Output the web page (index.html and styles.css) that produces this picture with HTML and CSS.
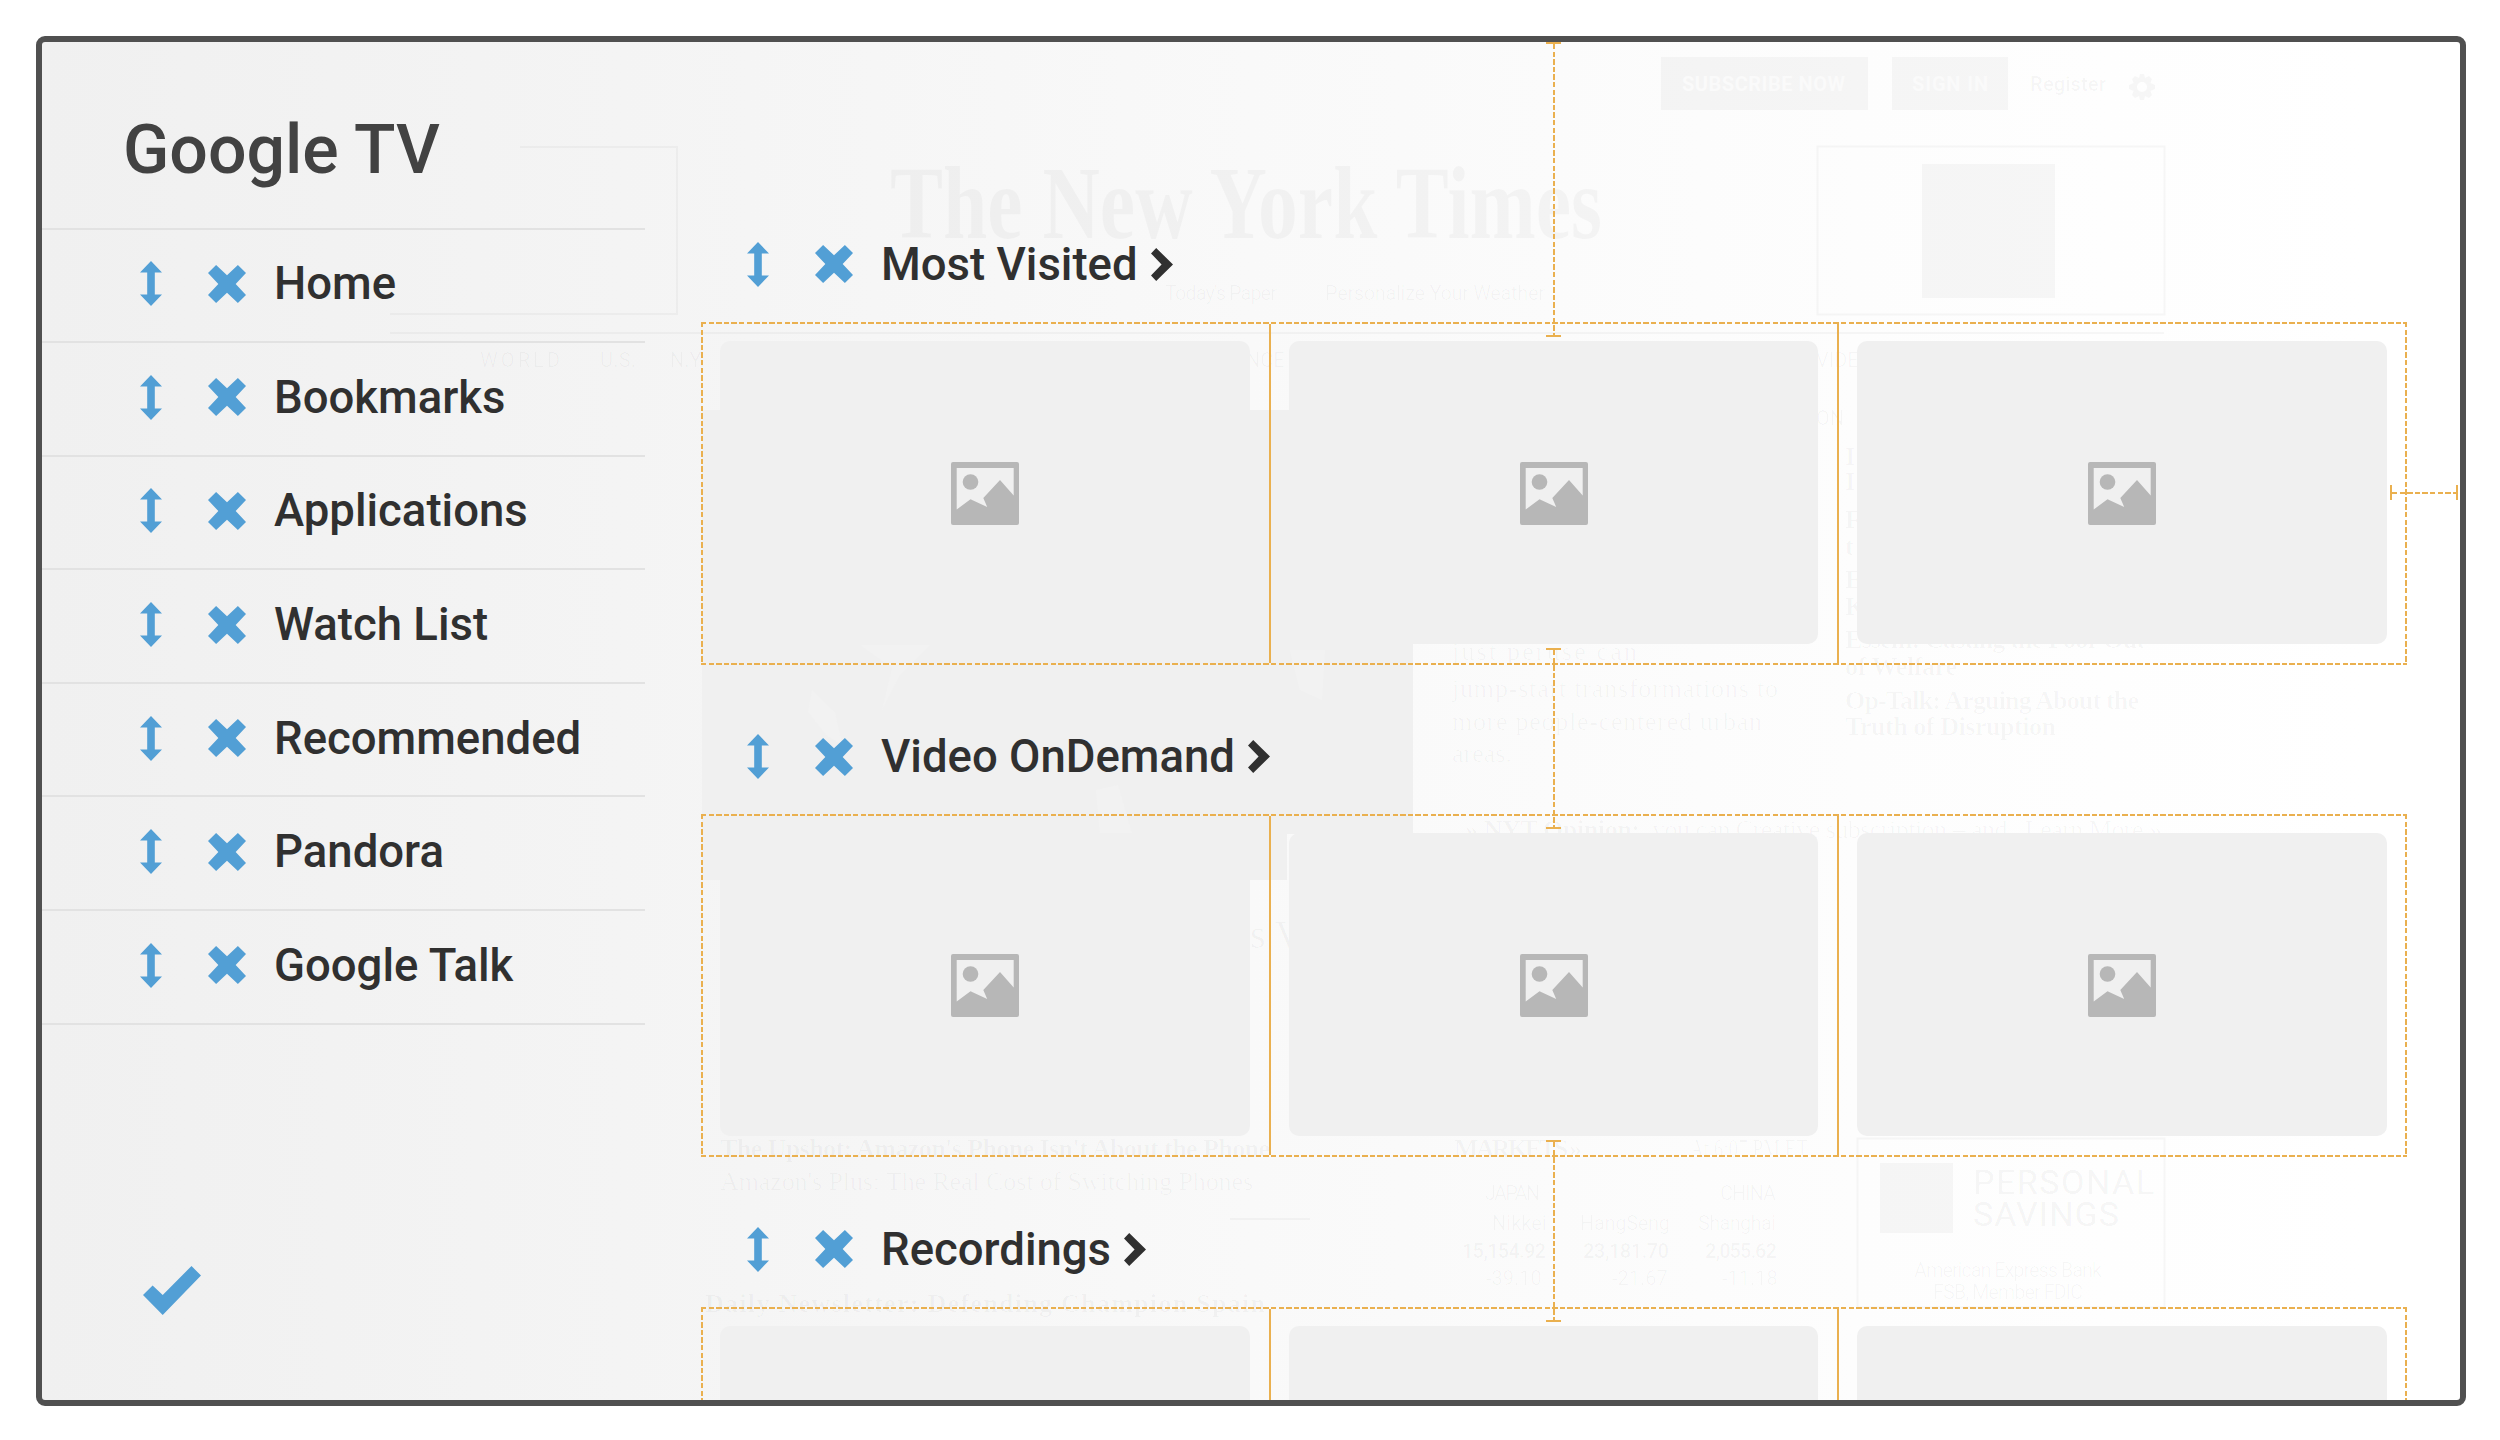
FILE: index.html
```html
<!DOCTYPE html>
<html lang="en">
<head>
    <meta charset="UTF-8">
    <meta name="viewport" content="width=device-width, initial-scale=1.0">
    <title>Google TV</title>
    <link rel="stylesheet" href="styles.css">
</head>
<body>
    <!-- Shared icons -->
    <svg class="icon-defs" width="0" height="0">
        <symbol id="icon-move" viewBox="0 0 22 45">
            <path d="M11 0L22 11.4H14.8V33.6H22L11 45L0 33.6H7.2V11.4H0Z"/>
        </symbol>
        <symbol id="icon-remove" viewBox="0 0 37.5 37.5">
            <path d="M8 0L18.75 10.2L29.5 0L37.5 8L27.3 18.75L37.5 29.5L29.5 37.5L18.75 27.3L8 37.5L0 29.5L10.2 18.75L0 8Z"/>
        </symbol>
        <symbol id="icon-chevron" viewBox="0 0 22 33">
            <path d="M5.2 0L22 16.5L5.2 33L0 27.6L10.6 16.5L0 5.4Z"/>
        </symbol>
        <symbol id="icon-check" viewBox="0 0 58 49">
            <path d="M48.5 0L58 9.6L19.7 49L0 29L9.6 19.4L19.7 29Z"/>
        </symbol>
        <symbol id="icon-image" viewBox="0 0 68 63">
            <path fill-rule="evenodd" d="M2 0H66Q68 0 68 2V61Q68 63 66 63H2Q0 63 0 61V2Q0 0 2 0ZM5.7 6V47.5L19.5 37.3L36.2 45L32.3 36L49 18L62.7 33.6V6Z"/>
            <circle cx="19.5" cy="20" r="7.8"/>
        </symbol>
        <symbol id="icon-gear" viewBox="-14 -14 28 28">
            <path fill-rule="evenodd" d="M-2 -13H2L3 -9L7 -11L10 -8L8.500 -4L13 -2V2L8.500 4L10 8L7 11L3 9L2 13H-2L-3 9L-7 11L-10 8L-8.500 4L-13 2V-2L-8.500 -4L-10 -8L-7 -11L-3 -9ZM0 -5A5 5 0 1 0 0 5A5 5 0 1 0 0 -5Z"/>
        </symbol>
    </svg>

    <div class="screen">
        <!-- Web page showing faintly through the overlay -->
        <svg class="backdrop" viewBox="42 42 2418 1358">
            <g class="blocks">
                <rect x="1661" y="57" width="207" height="53"/>
                <rect x="1892" y="57" width="116" height="53"/>
                <rect x="1922" y="164" width="133" height="134"/>
                <rect x="1880" y="1163" width="73" height="70"/>
            </g>
            <rect class="photo" x="702" y="410" width="711" height="424"/>
            <rect class="photo" x="702" y="834" width="585" height="46"/>
            <g class="photo-light">
                <path d="M812 690L835 712L842 745L826 735L808 712Z"/>
                <path d="M860 645H930L900 675L882 710L892 668Z"/>
                <path d="M1100 834L1096 790L1118 785L1132 834Z"/>
                <path d="M1290 650H1325L1322 700L1300 690Z"/>
            </g>
            <g class="lines">
                <rect x="1817.5" y="146.500" width="347" height="168"/>
                <rect x="1857.5" y="1138.500" width="307" height="169"/>
                <path d="M520 147H677V314H390M390 333H2164M1230 1219H1310"/>
            </g>
            <g class="button-text">
                <text x="1682" y="91" textLength="163">SUBSCRIBE NOW</text>
                <text x="1912" y="91" textLength="76">SIGN IN</text>
            </g>
            <text class="masthead" x="890" y="238" textLength="712" lengthAdjust="spacingAndGlyphs">The New York Times</text>
            <g class="sans">
                <text class="strong" x="2030" y="91" textLength="76">Register</text>
                <text x="1165" y="300" textLength="112">Today's Paper</text>
                <text x="1325" y="300" textLength="220">Personalize Your Weather</text>
                <text x="480" y="367" textLength="80">WORLD</text>
                <text x="600" y="367" textLength="36">U.S.</text>
                <text x="670" y="367">N.Y.</text>
                <text x="1246" y="367">NCE</text>
                <text x="1816" y="367">VIDEO</text>
                <text x="1816" y="425">ON</text>
                <text x="1485" y="1200" textLength="55">JAPAN</text>
                <text x="1720" y="1200" textLength="56">CHINA</text>
                <text x="1492" y="1230">Nikkei</text>
                <text x="1580" y="1230" textLength="90">HangSeng</text>
                <text x="1698" y="1230" textLength="78">Shanghai</text>
                <text class="strong" x="1462" y="1258" textLength="84">15,154.92</text>
                <text class="strong" x="1583" y="1258" textLength="86">23,181.70</text>
                <text class="strong" x="1705" y="1258" textLength="72">2,055.62</text>
                <text x="1486" y="1285">-39.10</text>
                <text x="1612" y="1285">-21.67</text>
                <text x="1722" y="1285">-11.18</text>
                <text x="1914" y="1277" textLength="188">American Express Bank</text>
                <text x="1933" y="1299" textLength="150">FSB, Member FDIC</text>
            </g>
            <use href="#icon-gear" x="2128" y="73" width="28" height="28"/>
            <g class="savings">
                <text x="1973" y="1194" textLength="181">PERSONAL</text>
                <text x="1973" y="1226" textLength="146">SAVINGS</text>
            </g>
            <g class="headline">
                <text x="400" y="215" textLength="240">to Wella Barca,</text>
                <text x="460" y="266" textLength="145">Does Image</text>
            </g>
            <g class="headline italic">
                <text x="350" y="442" textLength="275">Militants Find</text>
                <text x="340" y="494" textLength="308">Weapons That</text>
                <text x="536" y="549" textLength="106">Against</text>
                <text x="490" y="602" textLength="125">Attacks</text>
                <text x="460" y="1038" textLength="152">Is Said to</text>
                <text x="350" y="1080" textLength="270">Have Seized Iraq's</text>
                <text x="320" y="1127" textLength="322">Biggest Oil Refinery,</text>
            </g>
            <g class="serif pale">
                <text x="400" y="676" textLength="245">have been tested on being</text>
                <text x="400" y="705" textLength="190">some early forms of</text>
                <text x="400" y="815" textLength="245">approach, it is now a big</text>
                <text x="370" y="1217" textLength="275">among Iraq's workers, as a</text>
                <text x="350" y="1250" textLength="270">clash of ideas that began</text>
                <text x="350" y="1287" textLength="295">before they went for oil, has</text>
                <text x="340" y="1320" textLength="265">a meeting of some Iraqi</text>
                <text x="330" y="1355" textLength="320">officials and had reached out</text>
                <text x="330" y="1390" textLength="250">a deal in return for the</text>
            </g>
            <g class="serif">
                <text x="1452" y="660" textLength="185">just peruse can</text>
                <text x="1452" y="697" textLength="326">jump-start transformations to</text>
                <text x="1452" y="730" textLength="310">more people-centered urban</text>
                <text x="1452" y="762">areas.</text>
                <text x="720" y="1190" textLength="533">Amazon's Plus: The Real Cost of Switching Phones</text>
            </g>
            <g class="serif strong">
                <text x="1845" y="465">I</text>
                <text x="1845" y="490">I</text>
                <text x="1845" y="528">F</text>
                <text x="1845" y="555">t</text>
                <text x="1845" y="588">E</text>
                <text x="1845" y="615">K</text>
                <text x="1845" y="648" textLength="300">Essem: Casting the Poor Out</text>
                <text x="1845" y="675" textLength="112">of Welfare</text>
                <text x="1845" y="709" textLength="294">Op-Talk: Arguing About the</text>
                <text x="1845" y="735" textLength="211">Truth of Disruption</text>
                <text x="1465" y="838" textLength="175">» NYT Opinion:</text>
                <text x="720" y="1157" textLength="550">The Upshot: Amazon's Phone Isn't About the Phone</text>
                <text x="1454" y="1157" textLength="128">MARKETS »</text>
                <text x="705" y="1312" textLength="560">Daily Newsletter: Defending Champion Spain</text>
            </g>
            <text class="serif" x="1690" y="1157" textLength="118" lengthAdjust="spacingAndGlyphs">At 6:07 PM ET</text>
            <text class="serif" x="1652" y="838" textLength="510">you can Creative subscription – and . Learn More »</text>
            <text class="vows" x="1250" y="948">s V</text>
        </svg>

        <div class="sidebar">
            <h1>Google TV</h1>
            <ul class="menu">
                <li>
                    <svg class="move"><use href="#icon-move"/></svg>
                    <svg class="remove"><use href="#icon-remove"/></svg>
                    <span>Home</span>
                </li>
                <li>
                    <svg class="move"><use href="#icon-move"/></svg>
                    <svg class="remove"><use href="#icon-remove"/></svg>
                    <span>Bookmarks</span>
                </li>
                <li>
                    <svg class="move"><use href="#icon-move"/></svg>
                    <svg class="remove"><use href="#icon-remove"/></svg>
                    <span>Applications</span>
                </li>
                <li>
                    <svg class="move"><use href="#icon-move"/></svg>
                    <svg class="remove"><use href="#icon-remove"/></svg>
                    <span>Watch List</span>
                </li>
                <li>
                    <svg class="move"><use href="#icon-move"/></svg>
                    <svg class="remove"><use href="#icon-remove"/></svg>
                    <span>Recommended</span>
                </li>
                <li>
                    <svg class="move"><use href="#icon-move"/></svg>
                    <svg class="remove"><use href="#icon-remove"/></svg>
                    <span>Pandora</span>
                </li>
                <li>
                    <svg class="move"><use href="#icon-move"/></svg>
                    <svg class="remove"><use href="#icon-remove"/></svg>
                    <span>Google Talk</span>
                </li>
            </ul>
            <svg class="done"><use href="#icon-check"/></svg>
        </div>

        <div class="main">
            <div class="section">
                <h2>
                    <svg class="move"><use href="#icon-move"/></svg>
                    <svg class="remove"><use href="#icon-remove"/></svg>
                    <span>Most Visited</span>
                    <svg class="chevron"><use href="#icon-chevron"/></svg>
                </h2>
                <div class="tiles">
                    <div class="cell"><div class="card"><svg><use href="#icon-image"/></svg></div></div>
                    <div class="cell"><div class="card"><svg><use href="#icon-image"/></svg></div></div>
                    <div class="cell"><div class="card"><svg><use href="#icon-image"/></svg></div></div>
                </div>
            </div>
            <div class="section">
                <h2>
                    <svg class="move"><use href="#icon-move"/></svg>
                    <svg class="remove"><use href="#icon-remove"/></svg>
                    <span>Video OnDemand</span>
                    <svg class="chevron"><use href="#icon-chevron"/></svg>
                </h2>
                <div class="tiles">
                    <div class="cell"><div class="card"><svg><use href="#icon-image"/></svg></div></div>
                    <div class="cell"><div class="card"><svg><use href="#icon-image"/></svg></div></div>
                    <div class="cell"><div class="card"><svg><use href="#icon-image"/></svg></div></div>
                </div>
            </div>
            <div class="section">
                <h2>
                    <svg class="move"><use href="#icon-move"/></svg>
                    <svg class="remove"><use href="#icon-remove"/></svg>
                    <span>Recordings</span>
                    <svg class="chevron"><use href="#icon-chevron"/></svg>
                </h2>
                <div class="tiles">
                    <div class="cell"><div class="card"></div></div>
                    <div class="cell"><div class="card"></div></div>
                    <div class="cell"><div class="card"></div></div>
                </div>
            </div>
        </div>

        <!-- Spacing guides -->
        <div class="guide guide-top"></div>
        <div class="guide guide-middle"></div>
        <div class="guide guide-bottom"></div>
        <div class="guide-right"></div>
    </div>
</body>
</html>
```
FILE: styles.css
```css
* {
    box-sizing: border-box;
}
body {
    margin: 0;
    padding: 36px;
    width: 2500px;
    height: 1440px;
    overflow: hidden;
    background: #fff;
    font-family: Roboto, sans-serif;
    color: #303030;
}
svg {
    display: block;
    flex: none;
}
.icon-defs {
    position: absolute;
}
.screen {
    position: relative;
    display: flex;
    width: 2430px;
    height: 1370px;
    border: 6px solid #505050;
    border-radius: 9px;
    overflow: hidden;
    background: linear-gradient(90deg, #f0f0f0 0%, #f4f4f4 24%, #f9f9f9 50%, #fdfdfd 75%, #fff 96%);
}

/* Sidebar */
.sidebar {
    position: relative;
    width: 603px;
    display: flex;
    flex-direction: column;
}
h1 {
    margin: 0;
    height: 185.5px;
    padding: 68px 0 0 81px;
    font-size: 68px;
    line-height: 80px;
    font-weight: 500;
    color: #424242;
}
.menu {
    margin: 0;
    padding: 0;
    list-style: none;
    border-bottom: 2px solid #e2e2e2;
}
.menu li {
    display: flex;
    align-items: center;
    height: 113.6px;
    padding: 0 0 3px 98px;
    border-top: 2px solid #e2e2e2;
    font-size: 45.5px;
    font-weight: 500;
}
.move {
    width: 22px;
    height: 45px;
    margin-right: 46px;
    fill: #529fd5;
}
.remove {
    width: 38px;
    height: 38px;
    margin-right: 28px;
    fill: #529fd5;
}
.done {
    width: 58px;
    height: 49px;
    margin: auto 0 85px 101px;
    fill: #529fd5;
}

/* Content rows */
.main {
    position: relative;
    flex: 1;
    padding: 130px 0 0 56px;
}
.section {
    height: 492.5px;
    padding-top: 35.5px;
}
h2 {
    display: flex;
    align-items: center;
    height: 114px;
    margin: 0;
    padding: 0 0 1px 46px;
    font-size: 45.5px;
    font-weight: 500;
}
.chevron {
    width: 22px;
    height: 33px;
    margin-left: 13px;
    fill: #303030;
}
.tiles {
    display: flex;
    width: 1706px;
    height: 343px;
    padding: 2px 1px;
    background:
        repeating-linear-gradient(90deg, #eab04f 0 5.4px, transparent 5.4px 7.6px) top / 100% 2px no-repeat,
        repeating-linear-gradient(90deg, #eab04f 0 5.4px, transparent 5.4px 7.6px) bottom / 100% 2px no-repeat,
        repeating-linear-gradient(180deg, #eab04f 0 5.4px, transparent 5.4px 7.6px) left / 2px 100% no-repeat,
        repeating-linear-gradient(180deg, #eab04f 0 5.4px, transparent 5.4px 7.6px) right / 2px 100% no-repeat;
}
.cell {
    flex: 1;
    padding: 17px 19px 18px 18px;
}
.cell + .cell {
    border-left: 2px solid #eab04f;
}
.card {
    display: flex;
    align-items: center;
    justify-content: center;
    height: 303px;
    border-radius: 10px;
    background: #f0f0f0;
}
.card svg {
    width: 68px;
    height: 63px;
    margin-top: 2px;
    fill: #b7b7b7;
}

/* Spacing guides lie over the rows */
.guide {
    position: absolute;
    left: 1504px;
    width: 15px;
    background: repeating-linear-gradient(180deg, #eab04f 0 5.4px, transparent 5.4px 7.6px) center / 2px 100% no-repeat;
    border: solid #eab04f;
    border-width: 2px 0;
}
.guide-top {
    top: 0;
    height: 295px;
}
.guide-middle {
    top: 606px;
    height: 181px;
}
.guide-bottom {
    top: 1098px;
    height: 182px;
}
.guide-right {
    position: absolute;
    left: 2348px;
    top: 443px;
    width: 68px;
    height: 15px;
    background: repeating-linear-gradient(90deg, #eab04f 0 5.4px, transparent 5.4px 7.6px) center / 100% 2px no-repeat;
    border: solid #eab04f;
    border-width: 0 2px;
}

/* Faded page underneath */
.backdrop {
    position: absolute;
    left: 0;
    top: 0;
    width: 2418px;
    height: 1358px;
    fill: rgba(0, 0, 0, 0.03);
}
.backdrop .photo {
    fill: #f0f0f0;
}
.backdrop .photo-light {
    fill: #f2f2f2;
}
.backdrop .lines {
    fill: none;
    stroke: rgba(0, 0, 0, 0.03);
    stroke-width: 2;
}
.backdrop .button-text {
    font-size: 20px;
    font-weight: 700;
    fill: #fafafa;
}
.backdrop .masthead {
    font-family: "Liberation Serif", serif;
    font-size: 104px;
    font-weight: 700;
}
.backdrop .sans {
    font-size: 20px;
}
.backdrop .savings {
    font-size: 34px;
    fill: rgba(0, 0, 0, 0.05);
}
.backdrop .headline {
    font-family: "Liberation Serif", serif;
    font-size: 38px;
    font-weight: 700;
    fill: rgba(0, 0, 0, 0.014);
}
.backdrop .italic {
    font-style: italic;
}
.backdrop .serif {
    font-family: "Liberation Serif", serif;
    font-size: 26px;
}
.backdrop .pale {
    fill: rgba(0, 0, 0, 0.014);
}
.backdrop .strong {
    font-weight: 700;
}
.backdrop .vows {
    font-family: "Liberation Serif", serif;
    font-size: 40px;
}
```
